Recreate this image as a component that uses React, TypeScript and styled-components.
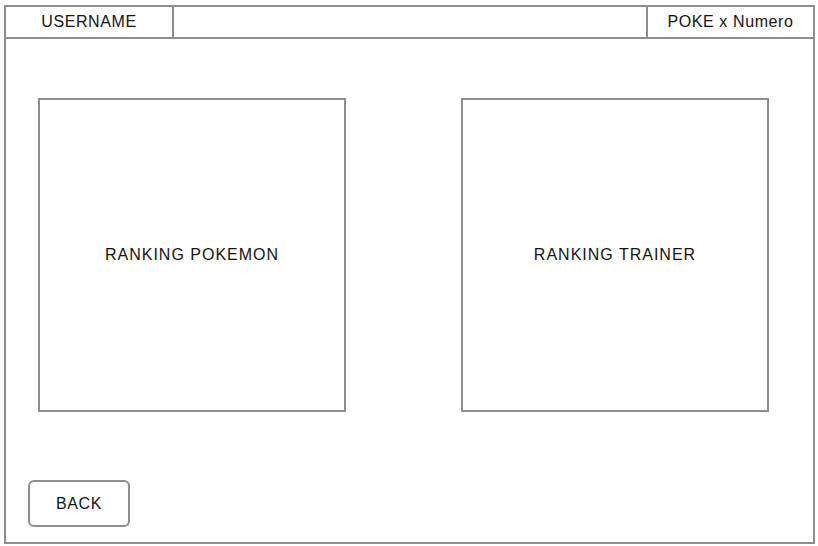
import React from 'react'
import styled, { createGlobalStyle } from 'styled-components'

const line = '#8e8e8e'

const GlobalStyle = createGlobalStyle`
  html, body {
    margin: 0;
    padding: 0;
    background: #fff;
    font-family: "Liberation Sans", Arial, sans-serif;
    color: #141414;
  }
`

export default function App() {
  return (
    <>
      <GlobalStyle />
      <Frame>
        <Header>
          <HeaderCell $width={166}>USERNAME</HeaderCell>
          <HeaderSpacer />
          <HeaderCell $width={165} $last>
            POKE x Numero
          </HeaderCell>
        </Header>
        <Content>
          <BoxRow>
            <RankingBox>RANKING POKEMON</RankingBox>
            <RankingBox>RANKING TRAINER</RankingBox>
          </BoxRow>
          <BackButton type="button">BACK</BackButton>
        </Content>
      </Frame>
    </>
  )
}

const Frame = styled.div`
  box-sizing: border-box;
  margin: 5px 0 0 4px;
  width: 811px;
  height: 539px;
  border: 2px solid ${line};
  display: flex;
  flex-direction: column;
`

const Header = styled.header`
  box-sizing: border-box;
  height: 32px;
  display: flex;
  border-bottom: 2px solid ${line};
`

const HeaderCell = styled.div<{ $width: number; $last?: boolean }>`
  width: ${p => p.$width}px;
  flex-shrink: 0;
  display: flex;
  align-items: center;
  justify-content: center;
  font-size: 16px;
  letter-spacing: 0.6px;
  border-right: ${p => (p.$last ? 'none' : `2px solid ${line}`)};
  border-left: ${p => (p.$last ? `2px solid ${line}` : 'none')};
`

const HeaderSpacer = styled.div`
  flex: 1;
`

const Content = styled.main`
  flex: 1;
  display: flex;
  flex-direction: column;
  padding: 59px 0 0 22px;
`

const BoxRow = styled.section`
  display: flex;
  gap: 115px;
  padding-left: 10px;
`

const RankingBox = styled.div`
  box-sizing: border-box;
  width: 308px;
  height: 314px;
  border: 2px solid ${line};
  display: flex;
  align-items: center;
  justify-content: center;
  font-size: 16px;
  letter-spacing: 1px;
`

const BackButton = styled.button`
  box-sizing: border-box;
  margin-top: 68px;
  width: 102px;
  height: 47px;
  border: 2px solid ${line};
  border-radius: 6px;
  background: #fff;
  font-family: "Liberation Sans", Arial, sans-serif;
  font-size: 16px;
  letter-spacing: 0.6px;
  color: #141414;
  padding: 0;
`
